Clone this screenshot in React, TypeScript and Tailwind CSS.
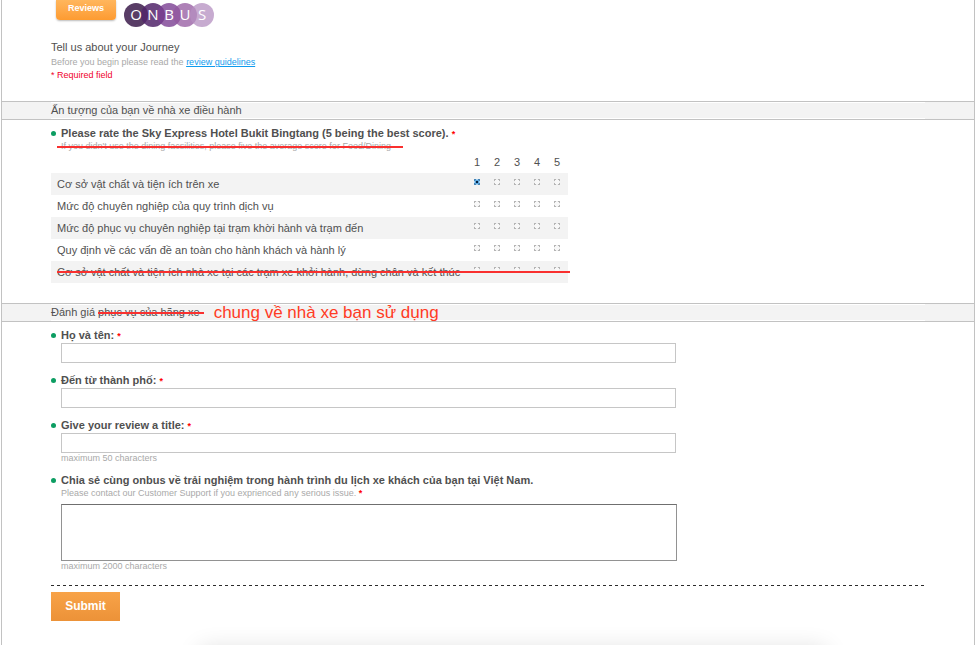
import React from "react";

const logoLetters = [
  { letter: "O", cx: 12, color: "#4b2c59", opacity: 0.92 },
  { letter: "N", cx: 29, color: "#51246a", opacity: 0.85 },
  { letter: "B", cx: 45, color: "#7a3f92", opacity: 0.8 },
  { letter: "U", cx: 61, color: "#93579f", opacity: 0.75 },
  { letter: "S", cx: 78, color: "#b48fc0", opacity: 0.75 },
];

const criteria = [
  { text: "Cơ sở vật chất và tiện ích trên xe", score: 1 },
  { text: "Mức độ chuyên nghiệp của quy trình dịch vụ" },
  { text: "Mức độ phục vụ chuyên nghiệp tại trạm khời hành và trạm đến" },
  { text: "Quy định về các vấn đề an toàn cho hành khách và hành lý" },
  {
    text: "Cơ sở vật chất và tiện ích nhà xe tại các trạm xe khởi hành, dừng chân và kết thúc",
    struck: true,
  },
];

function Logo() {
  return (
    <svg width="90" height="24" viewBox="0 0 90 24" role="img" aria-label="ONBUS">
      {logoLetters.map((l) => (
        <circle key={l.letter} cx={l.cx} cy="12" r="12" fill={l.color} fillOpacity={l.opacity} />
      ))}
      {logoLetters.map((l) => (
        <text
          key={l.letter}
          x={l.cx}
          y="17"
          textAnchor="middle"
          fill="#fff"
          className="font-['Open_Sans',sans-serif] text-[15px]"
        >
          {l.letter}
        </text>
      ))}
    </svg>
  );
}

function SectionBar({ children }: { children: React.ReactNode }) {
  return (
    <div className="border-y border-[#c2c2c2] bg-[#f3f3f3] px-[49px]">
      <h2 className="flex h-[17px] items-center border-y border-white">{children}</h2>
    </div>
  );
}

function Strike() {
  return <span className="absolute -left-1 -right-3 top-1/2 h-[2px] bg-[#f9302f]" />;
}

function Star() {
  return <span className="text-[9px] leading-none font-bold text-[#f00]">*</span>;
}

function Bullet() {
  return <span className="mt-1 h-[5px] w-[5px] shrink-0 rounded-full bg-[#0c9d62]" />;
}

function Item({ children }: { children: React.ReactNode }) {
  return (
    <li className="flex gap-[5px]">
      <Bullet />
      <div className="min-w-0 flex-1">{children}</div>
    </li>
  );
}

function TextField({ id, label, hint }: { id: string; label: string; hint?: string }) {
  return (
    <Item>
      <label htmlFor={id} className="block h-[14px] font-bold">
        {label} <Star />
      </label>
      <input
        id={id}
        type="text"
        className="block h-5 w-full max-w-[615px] border border-[#c6c6c6] bg-white px-1 outline-none"
      />
      {hint && <p className="h-[10px] text-[9px] leading-[10px] text-[#a9a9a9]">{hint}</p>}
    </Item>
  );
}

export default function App() {
  return (
    <div className="relative min-h-screen overflow-hidden bg-white px-px font-['Liberation_Sans',Arial,sans-serif] text-[11px] leading-[13px] text-[#505050]">
      <main className="min-h-screen border-x border-[#c2c2c2]">
        <header className="flex gap-2 pl-[54px]">
          <button
            type="button"
            className="h-5 w-[60px] rounded-b bg-linear-to-b from-[#ffb65c] to-[#fd9b30] pb-1 text-[9px] leading-[16px] font-bold text-white shadow-[0_1px_2px_#bbb]"
          >
            Reviews
          </button>
          <div className="pt-[3px]">
            <Logo />
          </div>
        </header>

        <div className="px-[49px] pt-[14px] pb-[19px]">
          <h1>Tell us about your Journey</h1>
          <p className="pt-[2px] text-[9px] text-[#a9a9a9]">
            Before you begin please read the{" "}
            <a href="#guidelines" className="text-[#0f9bee] underline">
              review guidelines
            </a>
          </p>
          <p className="text-[9px] text-[#f0002c]">* Required field</p>
        </div>

        <SectionBar>Ấn tượng của bạn về nhà xe điều hành</SectionBar>
        <section className="px-[49px] pt-[7px] pb-5">
          <ul>
            <Item>
              <p className="font-bold">
                Please rate the Sky Express Hotel Bukit Bingtang (5 being the best score). <Star />
              </p>
              <p className="relative h-3 w-fit text-[9px] leading-3 text-[#a9a9a9] line-through">
                If you didn't use the dining facsilities, please five the average score for Food/Dining
                <Strike />
              </p>
            </Item>
          </ul>
          <table className="w-full max-w-[517px] table-fixed border-collapse">
            <thead>
              <tr className="h-[21px] align-top">
                <td />
                {[1, 2, 3, 4, 5].map((n) => (
                  <th key={n} scope="col" className="w-5 pt-1 pr-[2px] font-normal">
                    {n}
                  </th>
                ))}
              </tr>
            </thead>
            <tbody>
              {criteria.map((row, i) => (
                <tr key={row.text} className="h-[22px] align-top odd:bg-[#f3f3f3]">
                  <th scope="row" className="pt-[5px] pl-[6px] text-left font-normal whitespace-nowrap">
                    {row.struck ? (
                      <span className="relative block line-through">
                        {row.text}
                        <span className="absolute -right-[102px] left-0 top-[5px] z-10 h-[2px] bg-[#f9302f]" />
                      </span>
                    ) : (
                      row.text
                    )}
                  </th>
                  {[1, 2, 3, 4, 5].map((n) => (
                    <td key={n} className="pt-[6px] pr-[2px]">
                      <input
                        type="radio"
                        name={`criterion-${i}`}
                        value={n}
                        aria-label={`${row.text}: ${n}`}
                        defaultChecked={row.score === n}
                        className="mx-auto block h-[6px] w-[6px] appearance-none [background:linear-gradient(#f8f8f8,#f8f8f8)_center/4px_4px_no-repeat,linear-gradient(#f0f0f0,#f0f0f0)_center/2px_6px_no-repeat,linear-gradient(#f0f0f0,#f0f0f0)_center/6px_2px_no-repeat,#b4b4b4] checked:[background:linear-gradient(#06213d,#06213d)_center/2px_2px_no-repeat,linear-gradient(#5aa5dc,#5aa5dc)_center/4px_4px_no-repeat,linear-gradient(#a8d4f3,#a8d4f3)_center/2px_6px_no-repeat,linear-gradient(#a8d4f3,#a8d4f3)_center/6px_2px_no-repeat,#4583b5]"
                      />
                    </td>
                  ))}
                </tr>
              ))}
            </tbody>
          </table>
        </section>

        <SectionBar>
          <span className="whitespace-pre">Đánh giá </span>
          <span className="relative line-through">
            phục vụ của hãng xe
            <span className="absolute -right-1 left-0 top-[6px] h-[2px] bg-[#f9302f]" />
          </span>
          <span className="pl-[14px] text-[17px] text-[#ff3b24]">chung về nhà xe bạn sử dụng</span>
        </SectionBar>
        <form className="px-[49px] pt-[7px]" onSubmit={(e) => e.preventDefault()}>
          <ul className="flex flex-col gap-[11px]">
            <TextField id="name" label="Họ và tên:" />
            <TextField id="city" label="Đến từ thành phố:" />
            <TextField id="title" label="Give your review a title:" hint="maximum 50 characters" />
            <Item>
              <label htmlFor="review" className="block font-bold">
                Chia sẻ cùng onbus về trải nghiệm trong hành trình du lịch xe khách của bạn tại Việt Nam.
              </label>
              <p className="text-[9px] text-[#a9a9a9]">
                Please contact our Customer Support if you exprienced any serious issue. <Star />
              </p>
              <textarea
                id="review"
                className="mt-1 block h-[57px] w-full max-w-[616px] resize-none border border-[#929292] border-t-[#6f6f6f] bg-white p-1 outline-none"
              />
              <p className="h-[10px] text-[9px] leading-[10px] text-[#a9a9a9]">maximum 2000 characters</p>
            </Item>
          </ul>
          <hr className="mt-[14px] h-px border-0 bg-[repeating-linear-gradient(90deg,#2c2c2c_0_3px,transparent_3px_6px)]" />
          <button
            type="submit"
            className="mt-[6px] h-[29px] w-[69px] bg-linear-to-b from-[#f8a348] to-[#ec9238] text-[12px] font-bold text-white"
          >
            Submit
          </button>
        </form>
      </main>
      <div className="absolute top-full right-[150px] left-[200px] mt-1 h-10 shadow-[0_0_24px_rgba(0,0,0,0.14)]" />
    </div>
  );
}
